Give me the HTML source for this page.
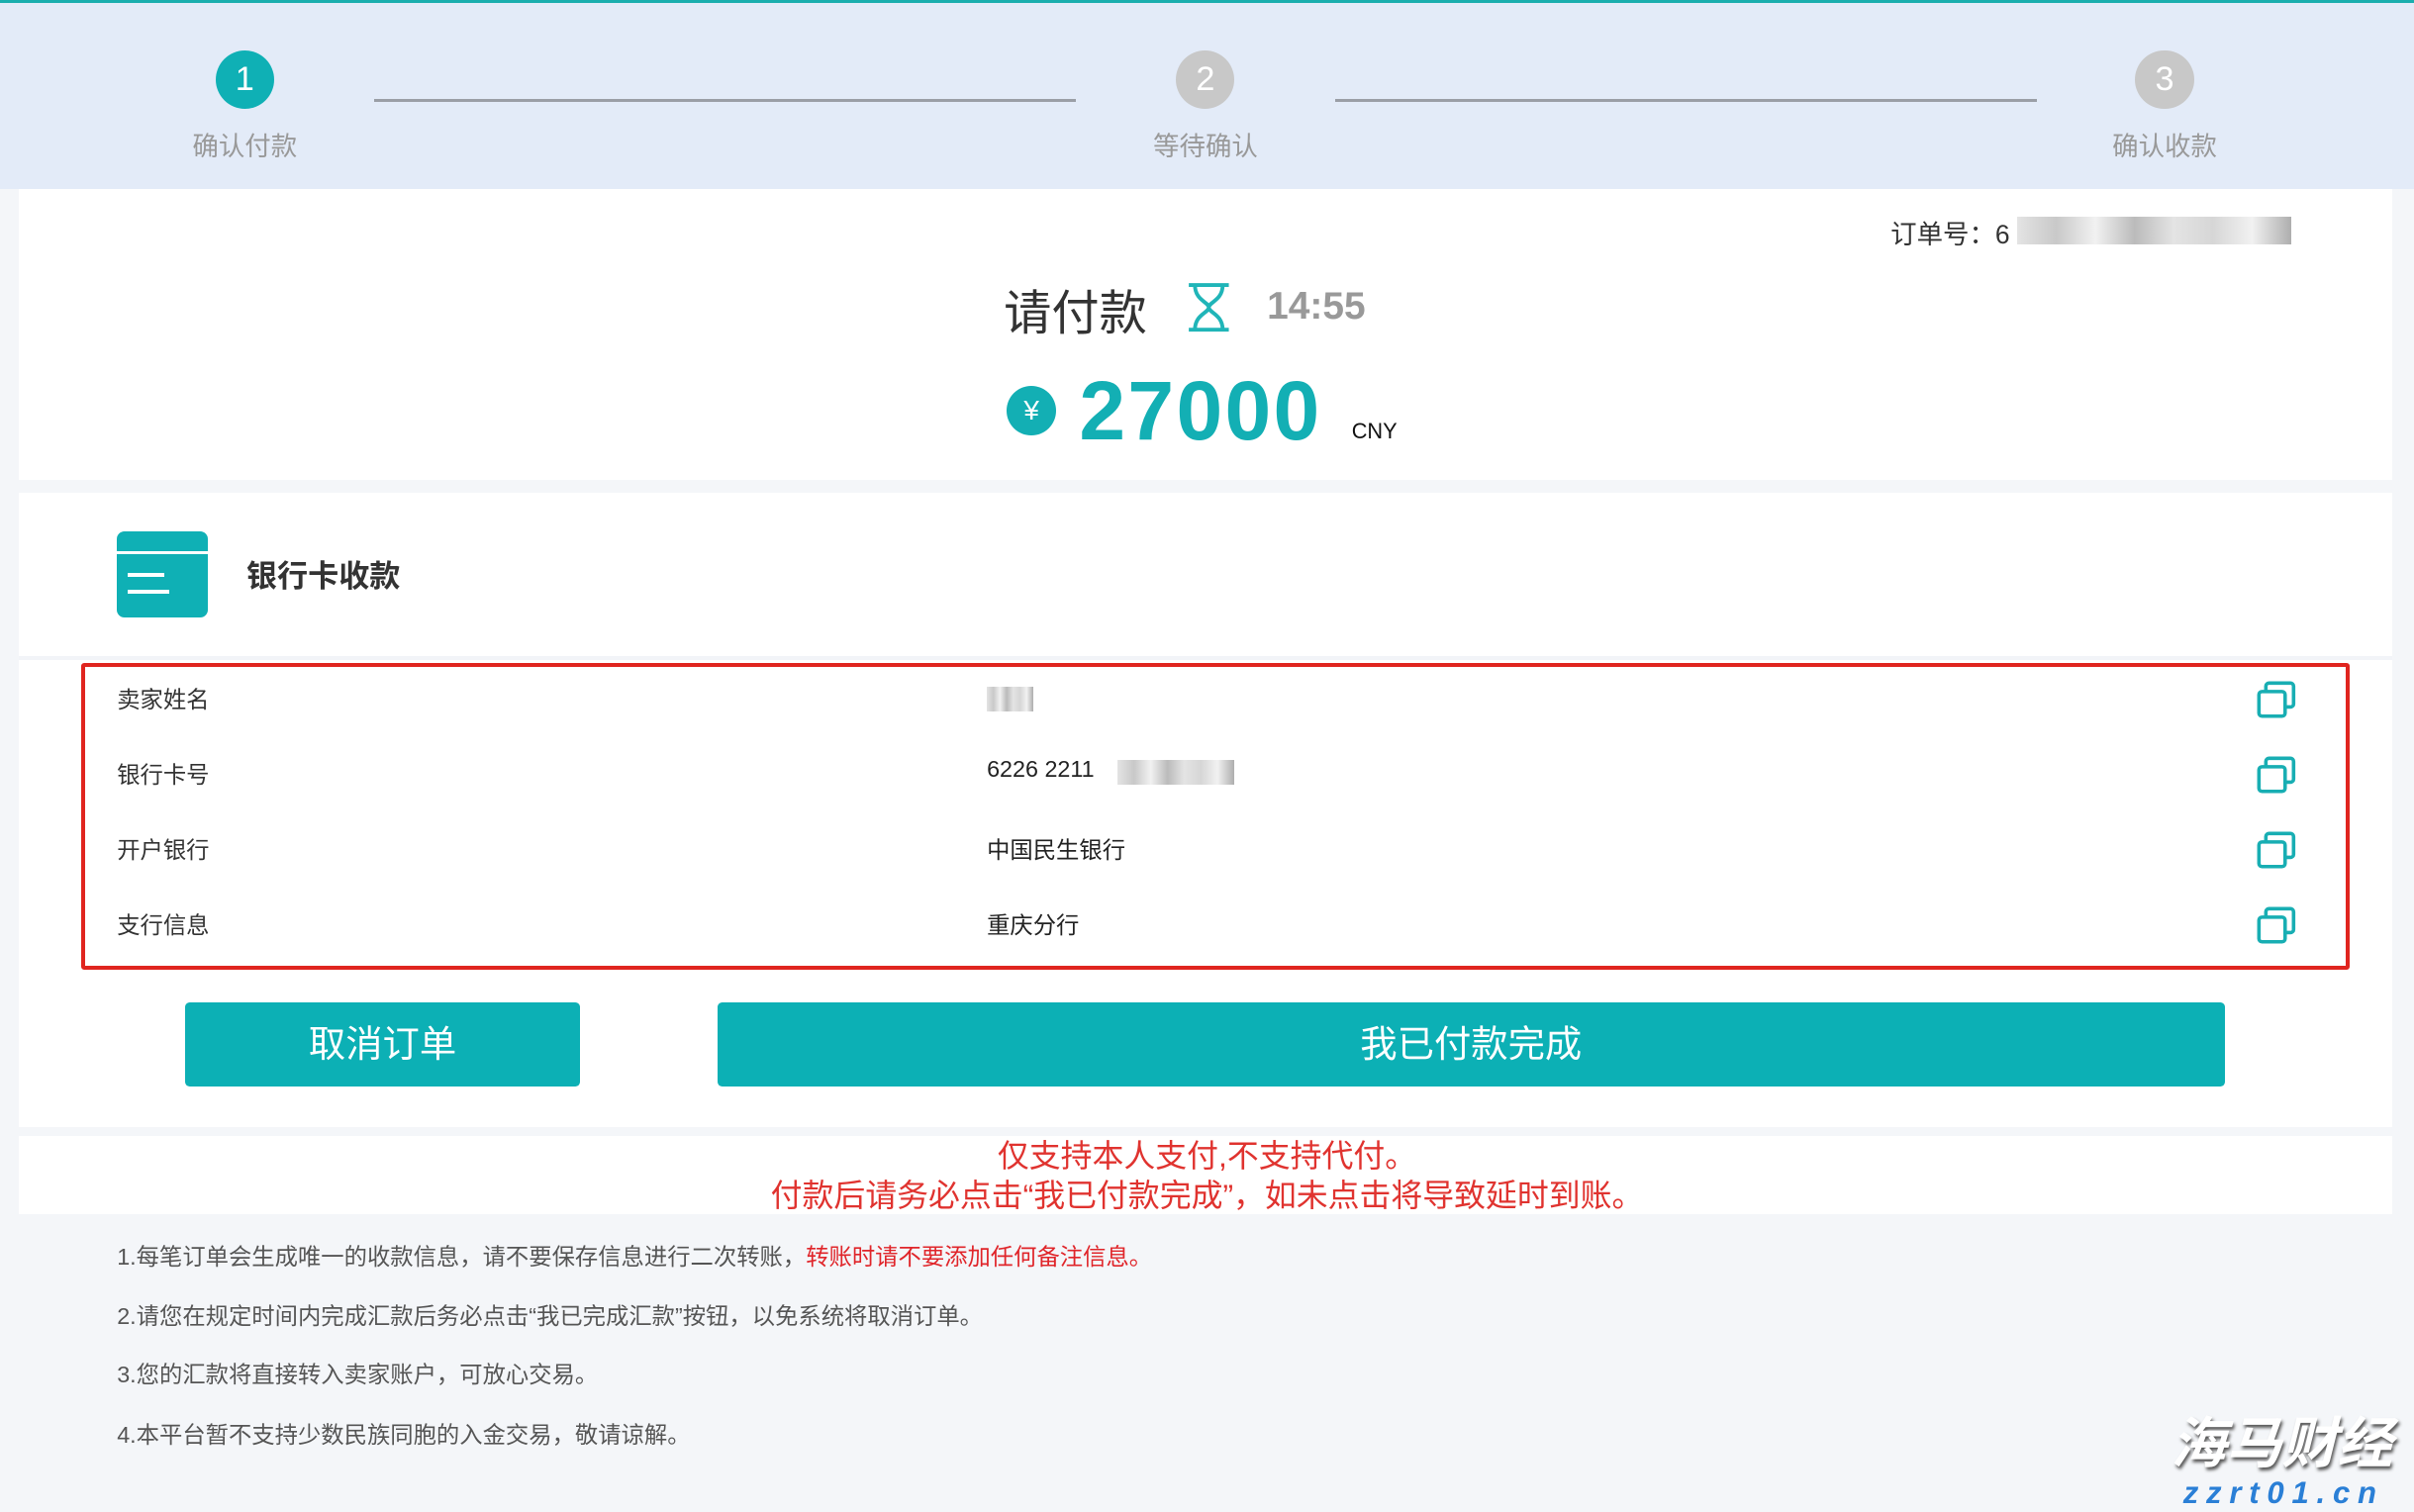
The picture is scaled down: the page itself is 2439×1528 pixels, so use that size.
<!DOCTYPE html>
<html><head><meta charset="utf-8"><style>
html,body{margin:0;padding:0;}
body{width:2439px;height:1527px;overflow:hidden;background:#f4f6f9;font-family:"Liberation Sans","Noto Sans CJK SC",sans-serif;}
#w{position:absolute;left:0;top:0;width:1568px;height:982px;zoom:1.5555;}
.a{position:absolute;white-space:nowrap;}
.c{position:absolute;width:38px;height:38px;border-radius:50%;color:#fff;font-size:22px;line-height:38px;text-align:center;}
.ln{position:absolute;height:2px;background:#9a9ea6;top:64px;}
.st{position:absolute;font-size:17px;color:#999;width:120px;text-align:center;top:81px;}
.lab{position:absolute;left:76px;font-size:15px;color:#333;}
.val{position:absolute;left:641px;font-size:15px;color:#222;}
.cp{position:absolute;left:1466px;}
.btn{position:absolute;top:651px;height:55px;background:#0cb0b5;border-radius:3px;color:#fff;font-size:24px;line-height:55px;text-align:center;}
.n{position:absolute;left:76px;font-size:15px;color:#555;}
.blur{position:absolute;background:linear-gradient(90deg,#ddd,#bbb,#eee,#aaa,#ddd,#ccc,#eee,#999);opacity:.8}
</style></head><body><div id="w">
<div class="a" style="left:0;top:0;width:1568px;height:123px;background:#e3ebf8;border-top:2px solid #1aaeae;box-sizing:border-box"></div>
<div class="c" style="left:140px;top:33px;background:#0fb0b5">1</div>
<div class="c" style="left:764px;top:33px;background:#c8c8c8">2</div>
<div class="c" style="left:1387px;top:33px;background:#c8c8c8">3</div>
<div class="ln" style="left:243px;width:456px"></div>
<div class="ln" style="left:867px;width:456px"></div>
<div class="st" style="left:99px">确认付款</div>
<div class="st" style="left:723px">等待确认</div>
<div class="st" style="left:1346px">确认收款</div>

<div class="a" style="left:12px;top:123px;width:1542px;height:189px;background:#fff"></div>
<div class="a" style="left:1228px;top:138px;font-size:17px;color:#333">订单号：6</div>
<div class="blur" style="left:1310px;top:141px;width:178px;height:18px"></div>
<div class="a" style="left:652px;top:178px;font-size:31px;color:#333">请付款</div>
<svg class="a" style="left:770px;top:183px" width="30" height="33" viewBox="0 0 30 33"><path d="M2 2H28M2 31H28M6 2C6 12 15 13 15 16.5C15 20 6 21 6 31M24 2C24 12 15 13 15 16.5C15 20 24 21 24 31" stroke="#20b5b8" stroke-width="2.5" fill="none"/></svg>
<div class="a" style="left:823px;top:185px;font-size:25px;color:#999;font-weight:bold">14:55</div>
<div class="a" style="left:654px;top:251px;width:32px;height:32px;border-radius:50%;background:#13afb4;color:#fff;font-size:18px;line-height:32px;text-align:center">¥</div>
<div class="a" style="left:701px;top:236px;font-size:54px;letter-spacing:1.5px;font-weight:bold;color:#13afb4;line-height:62px">27000</div>
<div class="a" style="left:878px;top:272px;font-size:14px;color:#111">CNY</div>

<div class="a" style="left:12px;top:320px;width:1542px;height:412px;background:#fff"></div>
<div class="a" style="left:12px;top:426px;width:1542px;height:3px;background:#f2f4f8"></div>
<div class="a" style="left:76px;top:345px;width:59px;height:56px;border-radius:5px;background:#0fb0b5"></div>
<div class="a" style="left:76px;top:358px;width:59px;height:2px;background:#fff"></div>
<div class="a" style="left:83px;top:372px;width:24px;height:3px;background:#fff"></div>
<div class="a" style="left:83px;top:383px;width:27px;height:3px;background:#fff"></div>
<div class="a" style="left:160px;top:358px;font-size:20px;font-weight:bold;color:#333">银行卡收款</div>

<div class="a" style="left:53px;top:431px;width:1473px;height:199px;border:3px solid #e0251f;box-sizing:border-box;border-radius:2px"></div>
<div class="lab" style="top:442px">卖家姓名</div>
<div class="lab" style="top:491px">银行卡号</div>
<div class="lab" style="top:540px">开户银行</div>
<div class="lab" style="top:589px">支行信息</div>
<div class="blur" style="left:641px;top:446px;width:30px;height:16px"></div>
<div class="val" style="top:491px">6226 2211</div>
<div class="blur" style="left:726px;top:494px;width:76px;height:16px"></div>
<div class="val" style="top:540px">中国民生银行</div>
<div class="val" style="top:589px">重庆分行</div>
<svg class="cp" style="top:442px" width="26" height="25" viewBox="0 0 26 25"><rect x="1.5" y="7" width="17" height="16" rx="2" stroke="#18aeb3" stroke-width="2.3" fill="none"/><path d="M6 7V3.5A2 2 0 0 1 8 1.5H22A2 2 0 0 1 24 3.5V15A2 2 0 0 1 22 17H18.5" stroke="#18aeb3" stroke-width="2.3" fill="none"/></svg>
<svg class="cp" style="top:491px" width="26" height="25" viewBox="0 0 26 25"><rect x="1.5" y="7" width="17" height="16" rx="2" stroke="#18aeb3" stroke-width="2.3" fill="none"/><path d="M6 7V3.5A2 2 0 0 1 8 1.5H22A2 2 0 0 1 24 3.5V15A2 2 0 0 1 22 17H18.5" stroke="#18aeb3" stroke-width="2.3" fill="none"/></svg>
<svg class="cp" style="top:540px" width="26" height="25" viewBox="0 0 26 25"><rect x="1.5" y="7" width="17" height="16" rx="2" stroke="#18aeb3" stroke-width="2.3" fill="none"/><path d="M6 7V3.5A2 2 0 0 1 8 1.5H22A2 2 0 0 1 24 3.5V15A2 2 0 0 1 22 17H18.5" stroke="#18aeb3" stroke-width="2.3" fill="none"/></svg>
<svg class="cp" style="top:589px" width="26" height="25" viewBox="0 0 26 25"><rect x="1.5" y="7" width="17" height="16" rx="2" stroke="#18aeb3" stroke-width="2.3" fill="none"/><path d="M6 7V3.5A2 2 0 0 1 8 1.5H22A2 2 0 0 1 24 3.5V15A2 2 0 0 1 22 17H18.5" stroke="#18aeb3" stroke-width="2.3" fill="none"/></svg>

<div class="btn" style="left:120px;width:257px">取消订单</div>
<div class="btn" style="left:466px;width:979px">我已付款完成</div>

<div class="a" style="left:12px;top:738px;width:1542px;height:51px;background:#fff"></div>
<div class="a" style="left:0;width:1568px;text-align:center;top:738px;font-size:20.5px;color:#e0332f;line-height:26px">仅支持本人支付,不支持代付。<br>付款后请务必点击“我已付款完成”，如未点击将导致延时到账。</div>

<div class="n" style="top:804px">1.每笔订单会生成唯一的收款信息，请不要保存信息进行二次转账，<span style="color:#e0252a">转账时请不要添加任何备注信息。</span></div>
<div class="n" style="top:843px">2.请您在规定时间内完成汇款后务必点击“我已完成汇款”按钮，以免系统将取消订单。</div>
<div class="n" style="top:881px">3.您的汇款将直接转入卖家账户，可放心交易。</div>
<div class="n" style="top:920px">4.本平台暂不支持少数民族同胞的入金交易，敬请谅解。</div>

<div class="a" style="left:1410px;top:918px;font-size:36px;font-weight:bold;font-style:italic;color:#fff;text-shadow:1px 2px 2px #555;line-height:40px">海马财经</div>
<div class="a" style="left:1418px;top:958px;font-size:20px;font-weight:bold;font-style:italic;color:#2a7fd6;letter-spacing:5px;line-height:24px">zzrt01.cn</div>
</div></body></html>
